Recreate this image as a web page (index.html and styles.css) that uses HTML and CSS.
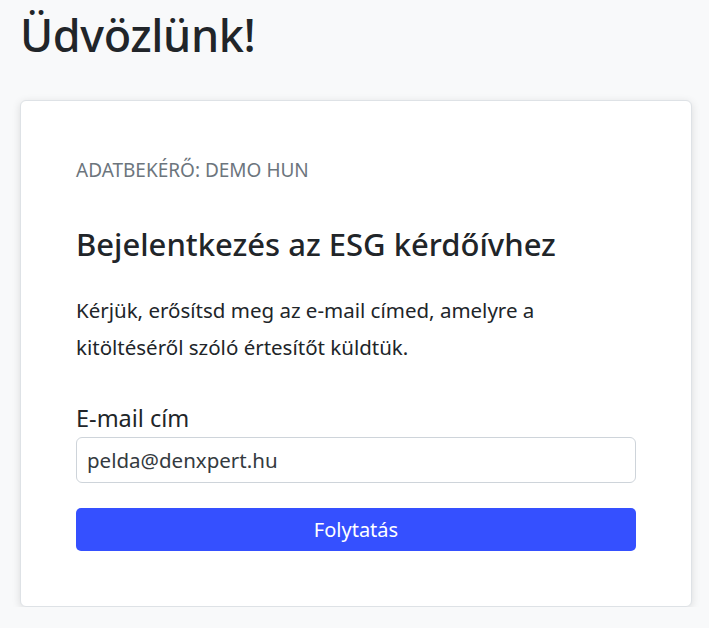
FILE: index.html
```html
<!DOCTYPE html>
<html lang="hu">
<head>
<meta charset="utf-8">
<title>Üdvözlünk!</title>
<link rel="stylesheet" href="styles.css">
</head>
<body>
<main class="page">
  <h1 class="title">Üdvözlünk!</h1>
  <section class="card">
    <div class="eyebrow">Adatbekérő: Demo HUN</div>
    <h2 class="card-title">Bejelentkezés az ESG kérdőívhez</h2>
    <p class="lead">Kérjük, erősítsd meg az e-mail címed, amelyre a kitöltéséről szóló értesítőt küldtük.</p>
    <form class="form">
      <label class="label" for="email">E-mail cím</label>
      <input class="input" id="email" type="email" value="pelda@denxpert.hu">
      <button class="btn" type="button">Folytatás</button>
    </form>
  </section>
</main>
</body>
</html>
```
FILE: styles.css
```css
* { box-sizing: border-box; }
html, body { margin: 0; padding: 0; }
body {
  background: #f8f9fa;
  color: #212529;
  font-family: "Noto Sans", "Open Sans", sans-serif;
}
.page {
  padding: 5px 17px 0 20px;
}
.title {
  margin: 0 0 35px 0;
  font-size: 45px;
  font-weight: 500;
  line-height: 60px;
  letter-spacing: -0.4px;
}
.card {
  background: #fff;
  border: 1px solid #dee2e6;
  border-radius: 6px;
  box-shadow: 0 2px 8px rgba(0,0,0,0.12);
  padding: 56px 55px 55px 55px;
}
.eyebrow {
  text-transform: uppercase;
  color: #6c757d;
  font-size: 19px;
  line-height: 26px;
  margin-bottom: 41px;
}
.card-title {
  margin: 0 0 28px 0;
  font-size: 31px;
  font-weight: 500;
  line-height: 40px;
}
.lead {
  margin: 0 0 37px 0;
  font-size: 20.5px;
  line-height: 37px;
}
.form {
  display: flex;
  flex-direction: column;
}
.label {
  font-size: 23.5px;
  line-height: 30px;
  margin-bottom: 4px;
}
.input {
  height: 46px;
  border: 1px solid #ced4da;
  border-radius: 6px;
  padding: 0 10px;
  font-family: inherit;
  font-size: 20.5px;
  color: #343a40;
  background: #fff;
  margin-bottom: 25px;
}
.btn {
  height: 43px;
  border: 0;
  border-radius: 5px;
  background: #3550ff;
  color: #fff;
  font-family: inherit;
  font-size: 20px;
}
```
